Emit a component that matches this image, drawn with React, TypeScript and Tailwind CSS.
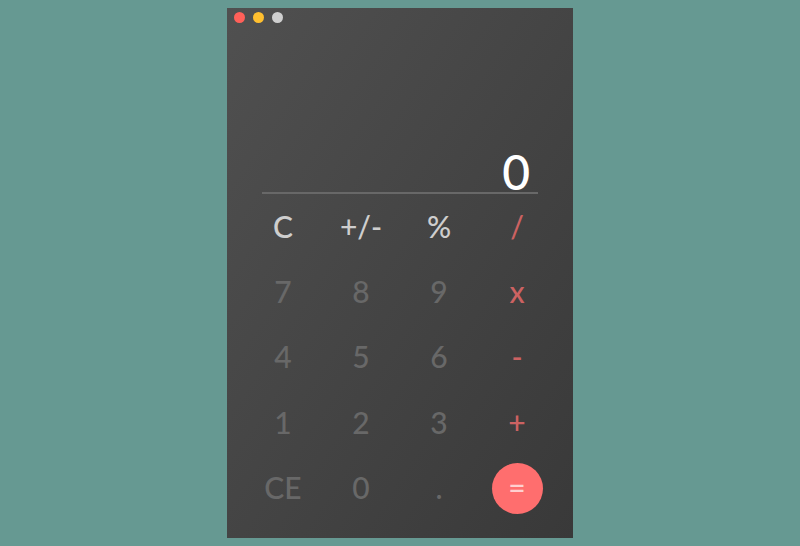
import { useState } from 'react';

type Tone = 'function' | 'digit' | 'operator' | 'equals';

interface Key {
  label: string;
  name: string;
  tone: Tone;
}

const keys: Key[] = [
  { label: 'C', name: 'Clear', tone: 'function' },
  { label: '+/-', name: 'Toggle sign', tone: 'function' },
  { label: '%', name: 'Percent', tone: 'function' },
  { label: '/', name: 'Divide', tone: 'operator' },
  { label: '7', name: '7', tone: 'digit' },
  { label: '8', name: '8', tone: 'digit' },
  { label: '9', name: '9', tone: 'digit' },
  { label: 'x', name: 'Multiply', tone: 'operator' },
  { label: '4', name: '4', tone: 'digit' },
  { label: '5', name: '5', tone: 'digit' },
  { label: '6', name: '6', tone: 'digit' },
  { label: '-', name: 'Subtract', tone: 'operator' },
  { label: '1', name: '1', tone: 'digit' },
  { label: '2', name: '2', tone: 'digit' },
  { label: '3', name: '3', tone: 'digit' },
  { label: '+', name: 'Add', tone: 'operator' },
  { label: 'CE', name: 'Clear entry', tone: 'digit' },
  { label: '0', name: '0', tone: 'digit' },
  { label: '.', name: 'Decimal point', tone: 'digit' },
  { label: '=', name: 'Equals', tone: 'equals' },
];

const tones: Record<Tone, string> = {
  function: 'text-[#cecece]',
  digit: 'text-[#686868]',
  operator: 'text-[#cc6262]',
  equals: 'bg-[#ff6e6e] text-[#ffd0d0]',
};

function compute(a: number, b: number, op: string): number {
  if (op === '+') return a + b;
  if (op === '-') return a - b;
  if (op === 'x') return a * b;
  return a / b;
}

export default function App() {
  const [value, setValue] = useState('0');
  const [stored, setStored] = useState<number | null>(null);
  const [operator, setOperator] = useState('');
  const [fresh, setFresh] = useState(true);

  function press(key: Key) {
    const { label, tone } = key;
    if (label === 'C' || label === 'CE') {
      setValue('0');
      setFresh(true);
      if (label === 'C') {
        setStored(null);
        setOperator('');
      }
    } else if (label === '+/-') {
      setValue(String(-Number(value)));
    } else if (label === '%') {
      setValue(String(Number(value) / 100));
    } else if (tone === 'digit') {
      if (label === '.' && value.includes('.') && !fresh) return;
      const base = fresh ? (label === '.' ? '0' : '') : value;
      setValue(base + label);
      setFresh(false);
    } else {
      const current = Number(value);
      const result = stored !== null && operator ? compute(stored, current, operator) : current;
      setValue(String(result));
      setStored(tone === 'equals' ? null : result);
      setOperator(tone === 'equals' ? '' : label);
      setFresh(true);
    }
  }

  return (
    <div className="flex min-h-screen justify-center bg-[#669992] p-2 font-['Lato',sans-serif] font-medium [font-kerning:normal] [text-rendering:optimizeLegibility]">
      <main className="flex w-full max-w-[346px] flex-col bg-linear-to-br from-[#505050] to-[#393939]">
        <div className="flex gap-2 px-[7px] pt-1">
          <button type="button" aria-label="Close" className="size-[11px] rounded-full bg-[#ff6059]" />
          <button type="button" aria-label="Minimize" className="size-[11px] rounded-full bg-[#ffbf2f]" />
          <button type="button" aria-label="Zoom" className="size-[11px] rounded-full bg-[#cfcfcf]" />
        </div>
        <div className="mx-[35px] mt-[120px] flex h-[51px] items-start justify-end border-b-2 border-[#686868] px-2">
          <output className="text-5xl leading-[57px] text-white">{value}</output>
        </div>
        <div className="grid flex-1 auto-rows-fr grid-cols-4 place-items-center px-[17px] pb-[17px]">
          {keys.map((key) => (
            <button
              key={key.label}
              type="button"
              aria-label={key.name}
              onClick={() => press(key)}
              className={`size-[51px] rounded-full pb-[2px] text-center text-[30px] leading-none ${tones[key.tone]}`}
            >
              {key.label}
            </button>
          ))}
        </div>
      </main>
    </div>
  );
}
